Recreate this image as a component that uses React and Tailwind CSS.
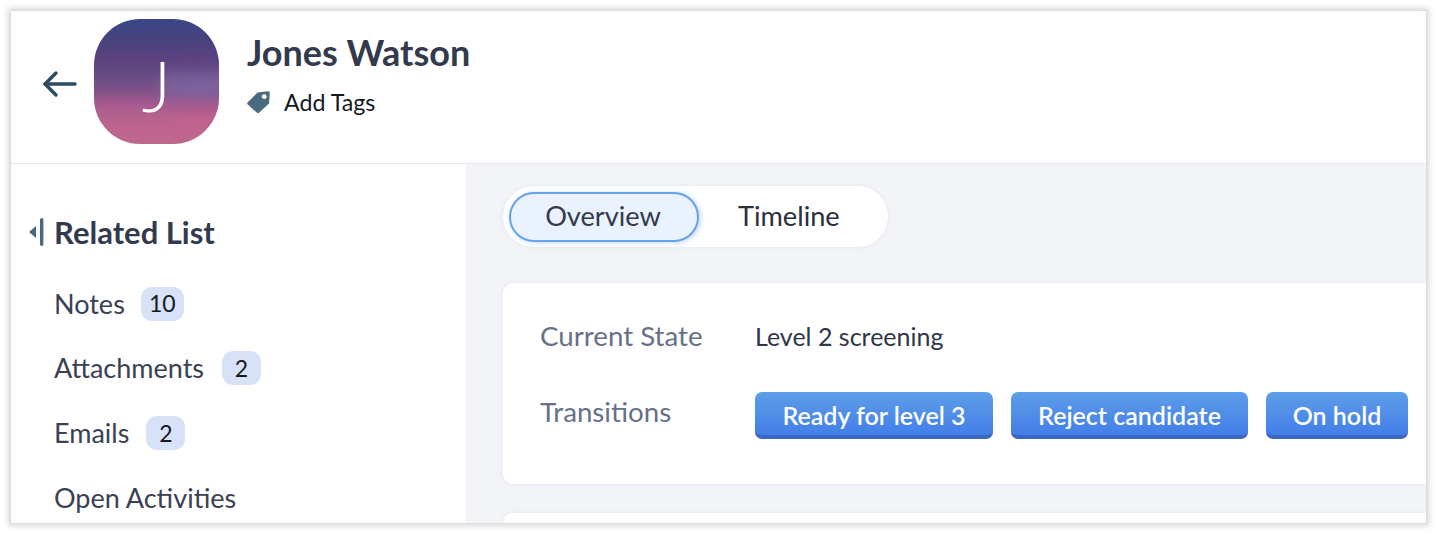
const RELATED = [
  { name: "Notes", count: "10", width: "w-[43px]", gap: "ml-[16px]" },
  { name: "Attachments", count: "2", width: "w-[39px]", gap: "ml-[18px]" },
  { name: "Emails", count: "2", width: "w-[39px]", gap: "ml-[17px]" },
  { name: "Open Activities" },
];

const TRANSITIONS = [
  { label: "Ready for level 3", width: "w-[238px]" },
  { label: "Reject candidate", width: "w-[237px]" },
  { label: "On hold", width: "w-[142px]" },
];

function Avatar() {
  return (
    <div className="relative flex h-[125px] w-[125px] shrink-0 items-center justify-center overflow-hidden rounded-[46px] bg-[linear-gradient(180deg,#39478a_0%,#44437f_14%,#5b437f_32%,#654a82_44%,#7d5289_56%,#a65a8e_68%,#bf628f_80%,#c0648f_88%,#bd6889_100%)]">
      <div className="absolute left-[66px] top-[54px] h-[24px] w-[76px] rounded-full bg-[#7f6ba8] opacity-70 blur-[8px]" />
      <div className="absolute left-[-10px] top-[92px] h-[10px] w-[90px] rounded-full bg-[#a9668f] opacity-60 blur-[5px]" />
      <span className="relative mt-[5px] text-[71px] font-light leading-none text-white">J</span>
    </div>
  );
}

export default function App() {
  return (
    <div className="h-[534px] w-[1437px] overflow-hidden bg-white p-[11px] font-['Lato','Liberation_Sans',sans-serif]">
      <div className="flex h-[512px] w-[1415px] flex-col overflow-hidden bg-white shadow-[0_0_0_1px_#dcdcdc,0_0_6px_3px_#d8d8d8]">
        {/* header */}
        <header className="flex h-[153px] shrink-0 items-start border-b border-[#e3e7ee] pt-[8px]">
          <svg className="ml-[31px] mr-[16px] mt-[50px] shrink-0" width="36" height="30" viewBox="0 0 36 30" fill="none" stroke="#2c4a60" strokeWidth="3.4" strokeLinecap="round" strokeLinejoin="round">
            <path d="M33 15H3" />
            <path d="M14 4 3 15l11 11" />
          </svg>
          <Avatar />
          <div className="ml-[28px] flex flex-col">
            <h1 className="mt-[10px] text-[36px] font-bold leading-[46px] text-[#333a4d]">Jones Watson</h1>
            <div className="mt-[12px] flex items-center">
              <svg width="24" height="24" viewBox="0 0 24 24" className="shrink-0">
                <path fillRule="evenodd" fill="#4a6a82" d="M0.5 12.5 10.5 2.5 21 1.2c1 -.1 1.8.7 1.8 1.7L22 13.5 12 22.8c-.6.5-1.4.5-2 0L.5 14.2c-.5-.5-.5-1.2 0-1.7ZM17.2 4.2a2.4 2.4 0 1 0 .01 0Z" />
              </svg>
              <span className="ml-[13px] text-[23.2px] leading-[30px] text-[#15181f]">Add Tags</span>
            </div>
          </div>
        </header>

        <div className="flex min-h-0 flex-1">
          {/* related list */}
          <aside className="w-[455px] shrink-0 bg-white">
            <div className="mt-[50px] flex items-center pl-[17px]">
              <svg width="16" height="28" viewBox="0 0 16 28" fill="#4a6a82" className="shrink-0">
                <path d="M8 8v12L1 14Z" />
                <rect x="12" y="0" width="3.4" height="28" rx="1.7" />
              </svg>
              <h2 className="ml-[10px] text-[31px] font-bold leading-[36px] text-[#333a4d]">Related List</h2>
            </div>
            <ul className="mt-[34px] flex flex-col gap-[25.7px] pl-[43px]">
              {RELATED.map((item) => (
                <li key={item.name} className="flex h-[39px] items-center">
                  <span className="text-[27px] leading-[34px] text-[#3a4153]">{item.name}</span>
                  {item.count && (
                    <span className={`${item.width} ${item.gap} flex h-[34px] items-center justify-center rounded-[11px] bg-[#d7e1f8] text-[23px] text-[#15181f]`}>
                      {item.count}
                    </span>
                  )}
                </li>
              ))}
            </ul>
          </aside>

          {/* main panel */}
          <main className="min-w-0 flex-1 bg-[#f2f4f8] pl-[37px] pt-[22px]">
            <div className="flex h-[61px] w-[385px] items-center rounded-full bg-white pl-[6px] shadow-[0_0_4px_rgba(120,130,160,0.12)]">
              <div className="flex h-[50px] w-[190px] items-center justify-center rounded-full border-2 border-[#66a3ec] bg-[#eaf2fe] pr-[2px] text-[27.2px] text-[#333a4d] shadow-[2px_1px_5px_rgba(90,150,235,0.35)]">
                Overview
              </div>
              <div className="ml-[39px] text-[27.2px] text-[#2a2f3c]">Timeline</div>
            </div>

            <section className="mt-[36px] h-[201px] rounded-l-[10px] bg-white pl-[37px] pt-[35px] shadow-[0_0_4px_rgba(120,130,160,0.12)]">
              <div className="flex items-center">
                <span className="w-[215px] text-[27.7px] leading-[36px] text-[#667089]">Current State</span>
                <span className="text-[25px] leading-[36px] text-[#30364a]">Level 2 screening</span>
              </div>
              <div className="mt-[38px] flex items-start">
                <span className="mt-[2px] w-[215px] text-[27.7px] leading-[36px] text-[#667089]">Transitions</span>
                <div className="flex gap-[18px]">
                  {TRANSITIONS.map((t) => (
                    <button key={t.label} className={`${t.width} h-[47px] rounded-[7px] border-b-[4px] border-[#3a68c0] bg-[linear-gradient(180deg,#5d9ee8_0%,#437ee8_100%)] pt-[3px] text-[25px] font-semibold leading-none text-white`}>
                      {t.label}
                    </button>
                  ))}
                </div>
              </div>
            </section>

            <section className="mt-[29px] h-[40px] rounded-l-[10px] bg-white shadow-[0_0_4px_rgba(120,130,160,0.12)]" />
          </main>
        </div>
      </div>
    </div>
  );
}
